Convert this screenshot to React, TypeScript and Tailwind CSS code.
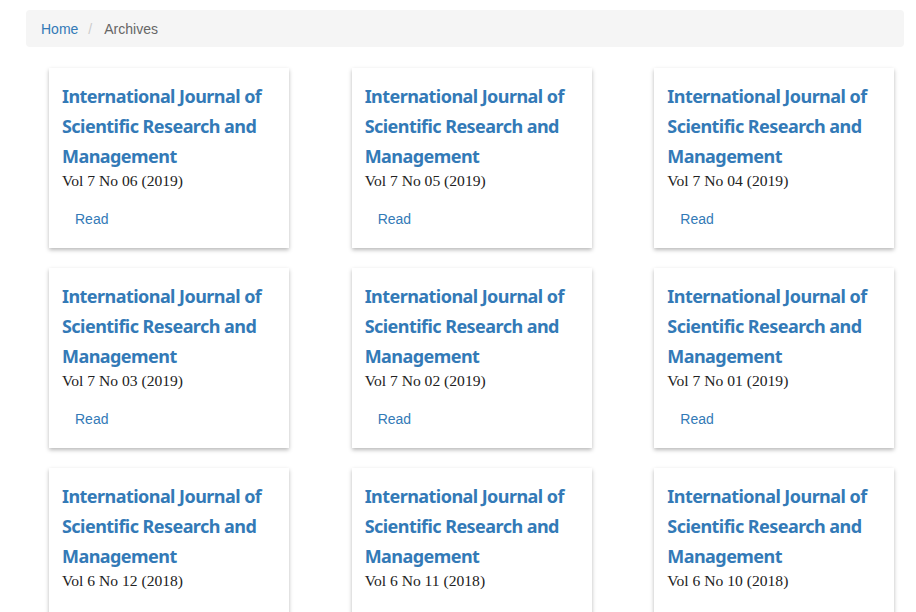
import React from 'react';

interface Issue {
  vol: number;
  no: string;
  year: number;
}

const issues: Issue[] = [
  { vol: 7, no: '06', year: 2019 },
  { vol: 7, no: '05', year: 2019 },
  { vol: 7, no: '04', year: 2019 },
  { vol: 7, no: '03', year: 2019 },
  { vol: 7, no: '02', year: 2019 },
  { vol: 7, no: '01', year: 2019 },
  { vol: 6, no: '12', year: 2018 },
  { vol: 6, no: '11', year: 2018 },
  { vol: 6, no: '10', year: 2018 },
];

const IssueCard: React.FC<{ issue: Issue }> = ({ issue }) => (
  <div className="ml-[23px] w-[240px] h-[180px] bg-white shadow-[0_2px_4px_rgba(0,0,0,0.28)] px-[13px] pt-[13px]">
    <h3 className="text-[18px] leading-[30px] font-bold text-[#337ab7] [font-family:'Noto_Sans',sans-serif] tracking-[-0.55px]">
      International Journal of Scientific Research and Management
    </h3>
    <p className="text-[15.6px] leading-[20px] text-[#222] [font-family:'Liberation_Serif',serif]">
      Vol {issue.vol} No {issue.no} ({issue.year})
    </p>
    <a href="#" className="inline-block mt-[18px] ml-[13px] text-[14px] leading-[20px] text-[#337ab7] [font-family:'Liberation_Sans',sans-serif]">
      Read
    </a>
  </div>
);

const App: React.FC = () => {
  return (
    <div className="w-[916px] h-[612px] overflow-hidden bg-white">
      <div className="pt-[10px] pl-[26px] pr-[12px]">
        <ol className="flex items-center h-[37px] pt-[2px] px-[15px] bg-[#f5f5f5] rounded-[4px] text-[14px] [font-family:'Liberation_Sans',sans-serif]">
          <li><a href="#" className="text-[#337ab7]">Home</a></li>
          <li className="pl-[10px] pr-[12px] text-[#ccc]">/</li>
          <li className="text-[#666]">Archives</li>
        </ol>
      </div>
      <div className="grid grid-cols-[302.67px_302.67px_302.67px] gap-y-[20px] pl-[26px] mt-[21px]">
        {issues.map((issue) => (
          <IssueCard key={`${issue.vol}-${issue.no}`} issue={issue} />
        ))}
      </div>
    </div>
  );
};

export default App;
